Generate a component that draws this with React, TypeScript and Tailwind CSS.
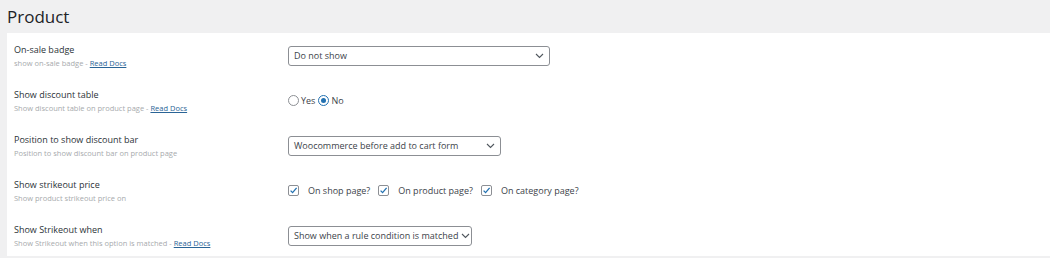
import React from "react";

type Row = {
  label: string;
  desc: string;
  docs?: boolean;
  control: React.ReactNode;
};

function Chevron() {
  return (
    <svg width="9" height="6" viewBox="0 0 9 6" className="shrink-0">
      <path d="M1 1 L4.5 4.5 L8 1" fill="none" stroke="#50575e" strokeWidth="1.1" />
    </svg>
  );
}

function Select({ value, width }: { value: string; width: string }) {
  return (
    <div
      className={`flex h-[20px] items-center justify-between gap-[3px] rounded-[3px] border border-[#8c8f94] bg-white pl-[5px] pr-[5px] text-[9px] text-[#3c434a] ${width}`}
    >
      <span className="whitespace-nowrap">{value}</span>
      <Chevron />
    </div>
  );
}

function Radio({ checked }: { checked?: boolean }) {
  return (
    <span
      className={`flex h-[11px] w-[11px] items-center justify-center rounded-full border bg-white ${
        checked ? "border-[#2271b1]" : "border-[#8c8f94]"
      }`}
    >
      {checked ? <span className="h-[5px] w-[5px] rounded-full bg-[#2271b1]" /> : null}
    </span>
  );
}

function Checkbox() {
  return (
    <span className="flex h-[11px] w-[11px] items-center justify-center rounded-[2px] border border-[#8c8f94] bg-white">
      <svg width="9" height="9" viewBox="0 0 9 9">
        <path d="M1.6 4.6 L3.6 6.6 L7.6 1.8" fill="none" stroke="#2271b1" strokeWidth="1.3" />
      </svg>
    </span>
  );
}

const rows: Row[] = [
  {
    label: "On-sale badge",
    desc: "show on-sale badge",
    docs: true,
    control: <Select value="Do not show" width="w-[262px]" />,
  },
  {
    label: "Show discount table",
    desc: "Show discount table on product page",
    docs: true,
    control: (
      <div className="flex items-center gap-[2px] text-[9px] text-[#3c434a]">
        <Radio />
        <span className="mr-[1px]">Yes</span>
        <Radio checked />
        <span>No</span>
      </div>
    ),
  },
  {
    label: "Position to show discount bar",
    desc: "Position to show discount bar on product page",
    control: <Select value="Woocommerce before add to cart form" width="w-[213px]" />,
  },
  {
    label: "Show strikeout price",
    desc: "Show product strikeout price on",
    control: (
      <div className="flex items-center text-[9px] text-[#3c434a]">
        {["On shop page?", "On product page?", "On category page?"].map((item) => (
          <label key={item} className="mr-[8px] flex items-center gap-[9px]">
            <Checkbox />
            <span>{item}</span>
          </label>
        ))}
      </div>
    ),
  },
  {
    label: "Show Strikeout when",
    desc: "Show Strikeout when this option is matched",
    docs: true,
    control: <Select value="Show when a rule condition is matched" width="w-[184px]" />,
  },
];

export default function App() {
  return (
    <div
      className="h-[258px] w-[1050px] overflow-hidden bg-[#f0f0f1]"
      style={{ fontFamily: '"Open Sans", "Noto Sans", sans-serif' }}
    >
      <h1 className="h-[33px] pl-[7px] pt-[3px] text-[17px] leading-[27px] font-normal text-[#1d2327]">
        Product
      </h1>
      <div className="ml-[7px] h-[223px] overflow-hidden bg-white">
        {rows.map((row) => (
          <div key={row.label} className="flex h-[45px] items-center pl-[7px]">
            <div className="w-[274px] shrink-0">
              <div className="text-[9px] leading-[14px] text-[#2c3338]">{row.label}</div>
              <div className="text-[7.5px] leading-[12px] text-[#a7aaad]">
                {row.desc}
                {row.docs ? (
                  <>
                    {" - "}
                    <a className="text-[#2a6496] underline">Read Docs</a>
                  </>
                ) : null}
              </div>
            </div>
            {row.control}
          </div>
        ))}
      </div>
    </div>
  );
}
